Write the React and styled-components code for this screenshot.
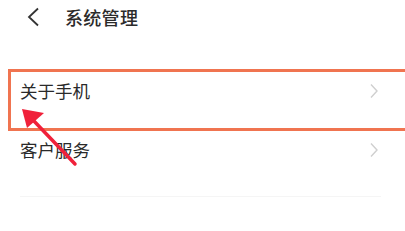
import React from 'react'
import styled, { createGlobalStyle } from 'styled-components'

const Global = createGlobalStyle`
  html, body {
    margin: 0;
    padding: 0;
    background: #fff;
    font-family: "Noto Sans CJK SC", "Noto Sans", sans-serif;
  }
`

const Page = styled.div`
  position: relative;
  width: 405px;
  height: 231px;
  overflow: hidden;
  background: #fff;
`

const Header = styled.header`
  display: flex;
  align-items: center;
  height: 33px;
  padding-left: 26px;
  gap: 23px;
`

const BackButton = styled.button`
  display: flex;
  align-items: center;
  border: 0;
  padding: 0;
  background: none;
  width: 16px;
  height: 20px;
`

const Title = styled.h1`
  margin: 0;
  font-size: 18px;
  font-weight: 500;
  color: #2b2b2b;
  letter-spacing: 0.3px;
`

const List = styled.ul`
  list-style: none;
  margin: 28px 0 0;
  padding: 0;
`

const Row = styled.li`
  display: flex;
  align-items: center;
  justify-content: space-between;
  height: 59px;
  padding: 0 26px 0 20px;
  font-size: 17.5px;
  color: #2a2a2a;
`

const Divider = styled.div`
  margin: 17px 24px 0 20px;
  height: 1px;
  background: #f5f5f5;
`

const Highlight = styled.div`
  position: absolute;
  left: 8px;
  top: 69px;
  width: 410px;
  height: 56px;
  border: 3px solid #f07450;
`

const Arrow = styled.svg`
  position: absolute;
  left: 0;
  top: 0;
  pointer-events: none;
`

const Chevron = () => (
  <svg width="10" height="16" viewBox="0 0 10 16">
    <path d="M2 1.5 L8 8 L2 14.5" fill="none" stroke="#cfcfcf" strokeWidth="1.4" />
  </svg>
)

const items = ['关于手机', '客户服务']

export default function App() {
  return (
    <Page>
      <Global />
      <Header>
        <BackButton>
          <svg width="14" height="20" viewBox="0 0 14 20">
            <path d="M12 1.5 L3 10 L12 18.5" fill="none" stroke="#333" strokeWidth="1.8" />
          </svg>
        </BackButton>
        <Title>系统管理</Title>
      </Header>
      <List>
        {items.map((t) => (
          <Row key={t}>
            <span>{t}</span>
            <Chevron />
          </Row>
        ))}
      </List>
      <Divider />
      <Highlight />
      <Arrow width="405" height="231" viewBox="0 0 405 231">
        <line x1="75" y1="164" x2="33" y2="120" stroke="#f0213a" strokeWidth="3.5" strokeLinecap="round" />
        <polygon points="22,109 44,113 27,128" fill="#f0213a" />
      </Arrow>
    </Page>
  )
}
